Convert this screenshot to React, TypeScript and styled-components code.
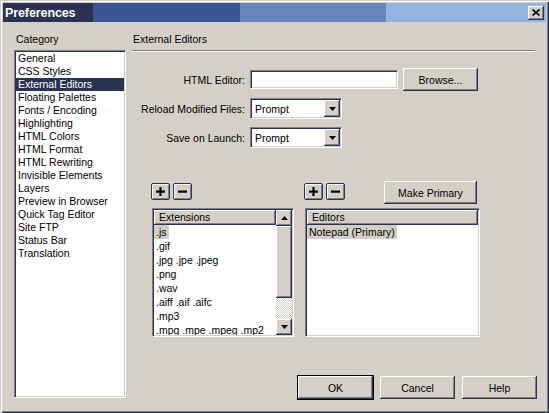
import React from 'react';
import styled, { createGlobalStyle, css } from 'styled-components';

const FACE = '#d4d0c8';
const SHADOW = '#808080';
const DARK = '#2b3452';

const GlobalStyle = createGlobalStyle`
  html, body {
    margin: 0;
    padding: 0;
    background: ${FACE};
  }
  body {
    font-family: 'Liberation Sans', Arial, sans-serif;
    font-size: 10.5px;
    color: #000;
  }
  * {
    box-sizing: border-box;
  }
`;

const raised = css`
  background: ${FACE};
  border: none;
  box-shadow: inset -1px -1px 0 ${DARK}, inset 1px 1px 0 #fff,
    inset -2px -2px 0 ${SHADOW}, inset 2px 2px 0 ${FACE};
`;

const sunken = css`
  border: 1px solid;
  border-color: ${SHADOW} #fff #fff ${SHADOW};
  box-shadow: inset 1px 1px 0 ${DARK}, inset -1px -1px 0 ${FACE};
  padding: 1px;
  background: #fff;
`;

const Window = styled.div`
  width: 549px;
  height: 413px;
  background: ${FACE};
  padding: 3px;
  display: flex;
  flex-direction: column;
  box-shadow: inset 1px 1px 0 ${FACE}, inset 2px 2px 0 #fff,
    inset -1px -1px 0 ${DARK}, inset -2px -2px 0 ${SHADOW};
`;

const TitleBar = styled.div`
  flex: none;
  height: 19px;
  display: flex;
  align-items: center;
  justify-content: space-between;
  padding: 0 2px;
  background: linear-gradient(
    90deg,
    #2a3452 0 90px,
    #3a5591 90px 237px,
    #6886bb 237px 383px,
    #92b4df 383px
  );
`;

const Title = styled.span`
  color: #fff;
  font-weight: bold;
  font-size: 12.5px;
  letter-spacing: -0.1px;
`;

const CloseButton = styled.button`
  ${raised};
  width: 16px;
  height: 14px;
  padding: 0 0 1px 0;
  display: flex;
  align-items: center;
  justify-content: center;
`;

const Body = styled.div`
  flex: 1;
  display: flex;
  padding: 11px 9px 11px 11px;
  min-height: 0;
`;

const LeftColumn = styled.div`
  width: 112px;
  display: flex;
  flex-direction: column;
  padding-bottom: 1px;
`;

const Caption = styled.div`
  line-height: 13px;
  height: 13px;
  padding-left: 2px;
`;

const CategoryList = styled.div`
  ${sunken};
  flex: 1;
  margin-top: 4px;
`;

const CategoryItem = styled.div<{ $selected?: boolean }>`
  height: 13px;
  line-height: 13px;
  padding-left: 2px;
  white-space: nowrap;
  background: ${(p) => (p.$selected ? '#2a3452' : 'transparent')};
  color: ${(p) => (p.$selected ? '#fff' : '#000')};
`;

const RightColumn = styled.div`
  flex: 1;
  margin-left: 6px;
  display: flex;
  flex-direction: column;
`;

const SectionTitle = styled.div`
  line-height: 13px;
  height: 13px;
  padding-left: 1px;
`;

const Separator = styled.div`
  margin: 4px 2px 0 0;
  height: 2px;
  border-top: 1px solid ${SHADOW};
  border-bottom: 1px solid #fff;
`;

const Form = styled.div`
  margin-top: 16px;
  display: flex;
  flex-direction: column;
  gap: 6px;
`;

const FormRow = styled.div`
  height: 23px;
  display: flex;
  align-items: center;
`;

const FieldLabel = styled.label`
  width: 113px;
  text-align: right;
  margin-right: 5px;
  white-space: nowrap;
`;

const TextField = styled.div`
  ${sunken};
  width: 148px;
  height: 19px;
`;

const Button = styled.button<{ $width?: number; $default?: boolean }>`
  ${raised};
  width: ${(p) => p.$width ?? 75}px;
  height: 23px;
  padding: 0;
  font-family: inherit;
  font-size: 10.5px;
  color: #000;
  outline: ${(p) => (p.$default ? '1px solid #000' : 'none')};
`;

const BrowseButton = styled(Button)`
  margin-left: 5px;
`;

const Select = styled.div`
  ${sunken};
  width: 92px;
  height: 21px;
  display: flex;
  align-items: center;
  justify-content: space-between;
`;

const SelectValue = styled.span`
  padding-left: 3px;
`;

const ArrowButton = styled.div<{ $h?: number }>`
  ${raised};
  width: 16px;
  height: ${(p) => p.$h ?? 16}px;
  flex: none;
  display: flex;
  align-items: center;
  justify-content: center;
`;

const ListsArea = styled.div`
  margin: 33px 0 0 20px;
  display: flex;
  gap: 11px;
`;

const ListGroup = styled.div<{ $width: number }>`
  width: ${(p) => p.$width}px;
  display: flex;
  flex-direction: column;
`;

const Toolbar = styled.div`
  height: 22px;
  display: flex;
  align-items: flex-start;
  gap: 3px;
  margin-bottom: 4px;
  margin-left: -1px;
`;

const SmallButton = styled.button`
  width: 19px;
  height: 17px;
  margin-top: 1px;
  padding: 0;
  border: 1px solid ${DARK};
  border-radius: 2px;
  background: ${FACE};
  box-shadow: inset 1px 1px 0 #fff, inset -1px -1px 0 ${SHADOW};
  display: flex;
  align-items: center;
  justify-content: center;
`;

const PrimaryButton = styled(Button)`
  margin-left: auto;
  margin-right: 3px;
  margin-top: -1px;
`;

const ListBox = styled.div`
  ${sunken};
  height: 129px;
  display: flex;
  overflow: hidden;
`;

const ListContent = styled.div`
  flex: 1;
  min-width: 0;
  display: flex;
  flex-direction: column;
  overflow: hidden;
`;

const ListHeader = styled.div`
  ${raised};
  flex: none;
  height: 15px;
  line-height: 15px;
  padding-left: 5px;
`;

const ListItem = styled.div`
  flex: none;
  height: 14px;
  line-height: 14px;
  white-space: nowrap;
`;

const ItemText = styled.span<{ $selected?: boolean }>`
  display: inline-block;
  padding: 0 2px;
  background: ${(p) => (p.$selected ? FACE : 'transparent')};
`;

const Scrollbar = styled.div`
  width: 16px;
  flex: none;
  display: flex;
  flex-direction: column;
`;

const Thumb = styled.div`
  ${raised};
  height: 72px;
  flex: none;
`;

const Track = styled.div`
  flex: 1;
  background-color: #fff;
  background-image: repeating-conic-gradient(${FACE} 0 25%, #fff 0 50%);
  background-size: 2px 2px;
`;

const Footer = styled.div`
  margin-top: auto;
  display: flex;
  justify-content: flex-end;
  align-items: center;
  gap: 7px;
`;

const Triangle = ({ up }: { up?: boolean }) => (
  <svg width="7" height="4" viewBox="0 0 7 4">
    <polygon points={up ? '3.5,0 7,4 0,4' : '0,0 7,0 3.5,4'} fill="#000" />
  </svg>
);

const PlusIcon = () => (
  <svg width="9" height="9" viewBox="0 0 9 9">
    <rect x="0" y="3.5" width="9" height="2.2" fill="#000" />
    <rect x="3.4" y="0" width="2.2" height="9" fill="#000" />
  </svg>
);

const MinusIcon = () => (
  <svg width="9" height="9" viewBox="0 0 9 9">
    <rect x="0" y="3.5" width="9" height="2.2" fill="#000" />
  </svg>
);

const categories = [
  'General',
  'CSS Styles',
  'External Editors',
  'Floating Palettes',
  'Fonts / Encoding',
  'Highlighting',
  'HTML Colors',
  'HTML Format',
  'HTML Rewriting',
  'Invisible Elements',
  'Layers',
  'Preview in Browser',
  'Quick Tag Editor',
  'Site FTP',
  'Status Bar',
  'Translation',
];

const extensions = [
  '.js',
  '.gif',
  '.jpg .jpe .jpeg',
  '.png',
  '.wav',
  '.aiff .aif .aifc',
  '.mp3',
  '.mpg .mpe .mpeg .mp2',
];

const App: React.FC = () => {
  return (
    <>
      <GlobalStyle />
      <Window>
        <TitleBar>
          <Title>Preferences</Title>
          <CloseButton title="Close">
            <svg width="8" height="7" viewBox="0 0 8 7">
              <path d="M0.5 0.5 L7.5 6.5 M7.5 0.5 L0.5 6.5" stroke="#000" strokeWidth="1.7" />
            </svg>
          </CloseButton>
        </TitleBar>

        <Body>
          <LeftColumn>
            <Caption>Category</Caption>
            <CategoryList>
              {categories.map((c) => (
                <CategoryItem key={c} $selected={c === 'External Editors'}>
                  {c}
                </CategoryItem>
              ))}
            </CategoryList>
          </LeftColumn>

          <RightColumn>
            <SectionTitle>External Editors</SectionTitle>
            <Separator />

            <Form>
              <FormRow>
                <FieldLabel>HTML Editor:</FieldLabel>
                <TextField />
                <BrowseButton>Browse...</BrowseButton>
              </FormRow>
              <FormRow>
                <FieldLabel>Reload Modified Files:</FieldLabel>
                <Select>
                  <SelectValue>Prompt</SelectValue>
                  <ArrowButton $h={17}>
                    <Triangle />
                  </ArrowButton>
                </Select>
              </FormRow>
              <FormRow>
                <FieldLabel>Save on Launch:</FieldLabel>
                <Select>
                  <SelectValue>Prompt</SelectValue>
                  <ArrowButton $h={17}>
                    <Triangle />
                  </ArrowButton>
                </Select>
              </FormRow>
            </Form>

            <ListsArea>
              <ListGroup $width={142}>
                <Toolbar>
                  <SmallButton title="Add extension">
                    <PlusIcon />
                  </SmallButton>
                  <SmallButton title="Remove extension">
                    <MinusIcon />
                  </SmallButton>
                </Toolbar>
                <ListBox>
                  <ListContent>
                    <ListHeader>Extensions</ListHeader>
                    {extensions.map((e, i) => (
                      <ListItem key={e}>
                        <ItemText $selected={i === 0}>{e}</ItemText>
                      </ListItem>
                    ))}
                  </ListContent>
                  <Scrollbar>
                    <ArrowButton>
                      <Triangle up />
                    </ArrowButton>
                    <Thumb />
                    <Track />
                    <ArrowButton>
                      <Triangle />
                    </ArrowButton>
                  </Scrollbar>
                </ListBox>
              </ListGroup>

              <ListGroup $width={175}>
                <Toolbar>
                  <SmallButton title="Add editor">
                    <PlusIcon />
                  </SmallButton>
                  <SmallButton title="Remove editor">
                    <MinusIcon />
                  </SmallButton>
                  <PrimaryButton $width={93}>Make Primary</PrimaryButton>
                </Toolbar>
                <ListBox>
                  <ListContent>
                    <ListHeader>Editors</ListHeader>
                    <ListItem>
                      <ItemText $selected>Notepad (Primary)</ItemText>
                    </ListItem>
                  </ListContent>
                </ListBox>
              </ListGroup>
            </ListsArea>

            <Footer>
              <Button $default>OK</Button>
              <Button>Cancel</Button>
              <Button>Help</Button>
            </Footer>
          </RightColumn>
        </Body>
      </Window>
    </>
  );
};

export default App;
